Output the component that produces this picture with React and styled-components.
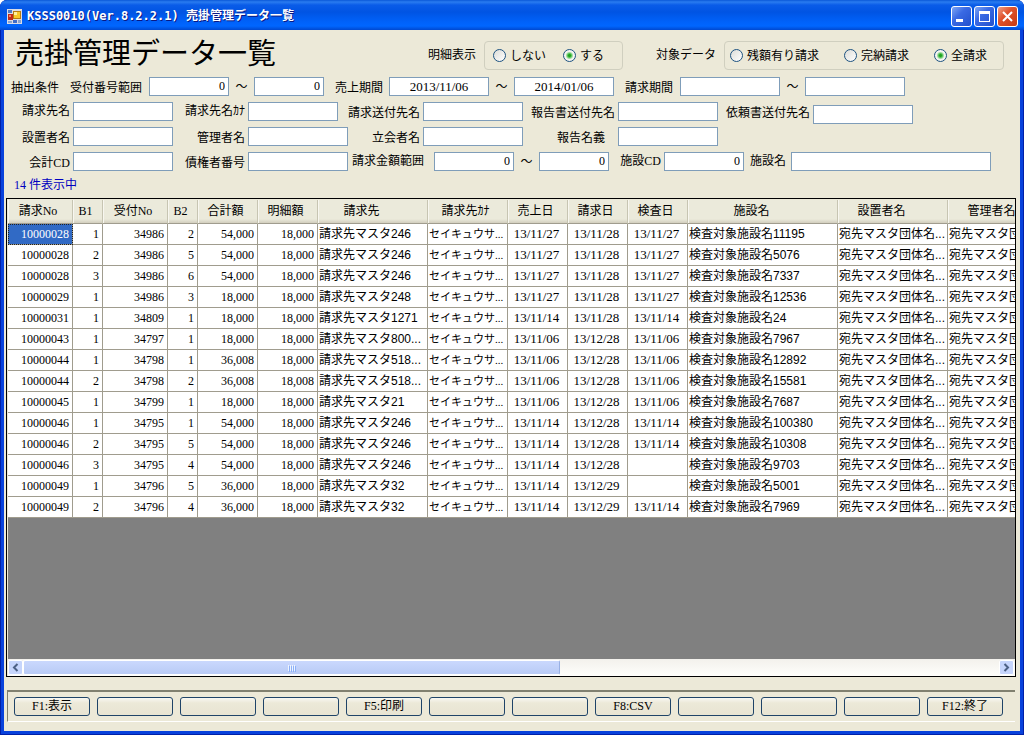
import React, { useState } from "react"
import styled, { createGlobalStyle, css } from "styled-components"

const GlobalStyle = createGlobalStyle`
  * {
    box-sizing: border-box;
  }
  body {
    margin: 0;
    background: #fff;
    color: #000;
    font-family: "Liberation Serif", "Noto Sans CJK JP", serif;
    font-size: 12px;
  }
  button, input {
    margin: 0;
    padding: 0;
    font: inherit;
    color: inherit;
  }
`

const Window = styled.div`
  display: flex;
  flex-direction: column;
  min-height: 100vh;
  overflow: hidden;
  border-radius: 7px 7px 0 0;
  background: #0842dc;
  box-shadow: inset 0 0 0 1px #0020a8;
`

const TitleBar = styled.header`
  display: flex;
  align-items: center;
  gap: 2px;
  height: 30px;
  padding: 2px 6px 0 7px;
  background: linear-gradient(
    #0a58d8 0,
    #2a7cf0 2px,
    #0a5ce8 5px,
    #0054e3 12px,
    #0062fa 22px,
    #0066ff 26px,
    #0048d0 30px
  );
`

const Caption = styled.div`
  flex: 1;
  padding-left: 3px;
  color: #fff;
  font-family: "DejaVu Sans Mono", "Noto Sans CJK JP", monospace;
  font-size: 12px;
  font-weight: 700;
  line-height: 20px;
  white-space: nowrap;
  text-shadow: 1px 1px 0 #0a1883;
`

const CaptionButton = styled.button`
  display: flex;
  align-items: center;
  justify-content: center;
  width: 21px;
  height: 21px;
  border: 1px solid #fff;
  border-radius: 3px;
  background: ${({ $close }) =>
    $close
      ? "linear-gradient(135deg, #f0a088, #e0532c 40%, #c63a12)"
      : "linear-gradient(135deg, #7ea6f4, #3a6ae4 40%, #2250cc)"};
`

const Client = styled.main`
  flex: 1;
  display: flex;
  flex-direction: column;
  margin: 0 4px 4px;
  background: #ece9d8;
`

const Heading = styled.div`
  display: flex;
  align-items: flex-start;
  height: 47px;
  padding: 11px 16px 0 11px;
`

const Title = styled.h1`
  flex: 1;
  margin: 0;
  font-size: 29px;
  font-weight: 400;
  line-height: 26px;
  white-space: nowrap;
`

const GroupLabel = styled.span`
  padding: 0 8px 0 33px;
  line-height: 28px;
`

const RadioGroup = styled.div`
  display: flex;
  align-items: center;
  height: 29px;
  padding-left: ${({ $pad }) => $pad}px;
  border: 1px solid #d0cfbf;
  border-radius: 4px;
`

const RadioLabel = styled.label`
  display: flex;
  align-items: center;
  gap: 4px;
  width: ${({ $w }) => $w}px;
  line-height: 20px;
  white-space: nowrap;
`

const Radio = styled.input`
  appearance: none;
  width: 13px;
  height: 13px;
  border: 1px solid #1d5281;
  border-radius: 50%;
  background: linear-gradient(135deg, #dcdcd7, #fff);
  &:checked {
    background: radial-gradient(circle, #21a121 0 1px, #55c455 2px, #f4f4f1 4px);
  }
`

const Filters = styled.form`
  display: flex;
  flex-direction: column;
  gap: 3px;
`

const FilterRow = styled.div`
  display: flex;
  height: 22px;
`

const Field = styled.div`
  display: flex;
  align-items: ${({ $low }) => ($low ? "flex-end" : "flex-start")};
`

const Label = styled.label`
  width: ${({ $w }) => $w}px;
  padding-right: ${({ $pad }) => $pad || 3}px;
  line-height: ${({ $high }) => ($high ? 19 : 22)}px;
  text-align: right;
  white-space: nowrap;
`

const Tilde = styled.span`
  width: 25px;
  line-height: 20px;
  text-align: center;
`

const TextBox = styled.input`
  width: ${({ $w }) => $w || 100}px;
  height: 19px;
  padding: 0 3px;
  border: 1px solid #7f9db9;
  background: #fff;
  text-align: ${({ $align }) => $align || "left"};
  font-size: ${({ $align }) => ($align === "center" ? 13 : 12)}px;
  line-height: 17px;
`

const Count = styled.p`
  margin: 0;
  padding-left: 10px;
  color: #0000c0;
  line-height: 22px;
  height: 24px;
`

const GridFrame = styled.section`
  flex: 1;
  display: flex;
  flex-direction: column;
  min-width: 0;
  margin: 0 4px 0 2px;
  padding: 1px 0 0 1px;
  border: 1px solid #000;
  background: #ece9d8;
`

const GridBody = styled.div`
  flex: 1;
  overflow: hidden;
  background: #808080;
`

const Table = styled.table`
  width: 1050px;
  table-layout: fixed;
  border-collapse: separate;
  border-spacing: 0;
`

const HeadCell = styled.th`
  height: 24px;
  padding: 0 ${({ $sortable }) => ($sortable ? 22 : 4)}px 2px 0;
  border-right: 1px solid #c7c5b2;
  border-bottom: 1px solid #a09c8e;
  background: linear-gradient(#ebeadb 19px, #d2cebe 23px);
  font-weight: 400;
  line-height: 20px;
  text-align: center;
  white-space: nowrap;
  box-shadow: inset 1px 0 0 #f8f7f0;
`

const Cell = styled.td`
  height: 21px;
  padding: 0 1px;
  border-right: 1px solid #a09c8e;
  border-bottom: 1px solid #a09c8e;
  background: #fff;
  line-height: 20px;
  text-align: left;
  white-space: nowrap;
  overflow: hidden;
  ${({ $kind }) =>
    $kind === "number" &&
    css`
      padding-right: 3px;
      text-align: right;
    `}
  ${({ $kind }) =>
    $kind === "date" &&
    css`
      padding: 0 2px 0 0;
      font-size: 13px;
      text-align: center;
    `}
  ${({ $kind }) =>
    $kind === "kana" &&
    css`
      font-size: 11px;
    `}
  ${({ $kind }) =>
    $kind === "text" &&
    css`
      font-family: "Liberation Sans", "Noto Sans CJK JP", sans-serif;
    `}
  ${({ $selected }) =>
    $selected &&
    css`
      background: #316ac5;
      color: #fff;
      outline: 1px dotted #222;
      outline-offset: -1px;
    `}
`

const ScrollBar = styled.div`
  display: flex;
  height: 17px;
  padding: 1px 1px 1px 0;
  background: linear-gradient(#f3f1ec, #fefefb);
`

const ScrollButton = styled.button`
  display: flex;
  align-items: center;
  justify-content: center;
  width: 15px;
  height: 15px;
  border: 1px solid #fff;
  border-radius: 2px;
  background: #c6d5fc;
`

const Track = styled.div`
  flex: 1;
  display: flex;
`

const Thumb = styled.div`
  display: flex;
  align-items: center;
  justify-content: center;
  gap: 1px;
  width: 55%;
  border: 1px solid #fff;
  border-right-color: #98b0e4;
  border-radius: 2px;
  background: linear-gradient(#cad8fd, #b9cbf6);
`

const Grip = styled.span`
  width: 1px;
  height: 6px;
  background: #eef4fe;
  box-shadow: 1px 1px 0 #8cb0f8;
`

const FunctionBar = styled.footer`
  display: grid;
  grid-template-columns: repeat(12, 1fr);
  gap: 7px;
  margin: 13px 5px 9px 3px;
  padding: 5px 12px 5px 6px;
  border: solid;
  border-width: 2px 0 1px 1px;
  border-color: #808070 #fff #fff #808070;
`

const FunctionButton = styled.button`
  height: 19px;
  border: 1px solid #1f4468;
  border-radius: 3px;
  background: linear-gradient(#f8f7f2, #ece9d8 5px, #e8e4d2);
  line-height: 17px;
  white-space: nowrap;
`

const columns = [
  { label: "請求No", width: 65, kind: "number" },
  { label: "B1", width: 30, kind: "number" },
  { label: "受付No", width: 65, kind: "number" },
  { label: "B2", width: 30, kind: "number" },
  { label: "合計額", width: 60, kind: "number" },
  { label: "明細額", width: 60, kind: "number" },
  { label: "請求先", width: 110, kind: "text", sortable: true },
  { label: "請求先ｶﾅ", width: 80, kind: "kana" },
  { label: "売上日", width: 60, kind: "date" },
  { label: "請求日", width: 60, kind: "date" },
  { label: "検査日", width: 60, kind: "date" },
  { label: "施設名", width: 150, kind: "text", sortable: true },
  { label: "設置者名", width: 110, kind: "text", sortable: true },
  { label: "管理者名", width: 110, kind: "text", sortable: true },
]

const KANA = "セイキュウサ..."
const OWNER = "宛先マスタ団体名..."

const rows = [
  ["10000028", "1", "34986", "2", "54,000", "18,000", "246", "13/11/27", "13/11/28", "13/11/27", "11195"],
  ["10000028", "2", "34986", "5", "54,000", "18,000", "246", "13/11/27", "13/11/28", "13/11/27", "5076"],
  ["10000028", "3", "34986", "6", "54,000", "18,000", "246", "13/11/27", "13/11/28", "13/11/27", "7337"],
  ["10000029", "1", "34986", "3", "18,000", "18,000", "248", "13/11/27", "13/11/28", "13/11/27", "12536"],
  ["10000031", "1", "34809", "1", "18,000", "18,000", "1271", "13/11/14", "13/11/28", "13/11/14", "24"],
  ["10000043", "1", "34797", "1", "18,000", "18,000", "800...", "13/11/06", "13/12/28", "13/11/06", "7967"],
  ["10000044", "1", "34798", "1", "36,008", "18,000", "518...", "13/11/06", "13/12/28", "13/11/06", "12892"],
  ["10000044", "2", "34798", "2", "36,008", "18,008", "518...", "13/11/06", "13/12/28", "13/11/06", "15581"],
  ["10000045", "1", "34799", "1", "18,000", "18,000", "21", "13/11/06", "13/12/28", "13/11/06", "7687"],
  ["10000046", "1", "34795", "1", "54,000", "18,000", "246", "13/11/14", "13/12/28", "13/11/14", "100380"],
  ["10000046", "2", "34795", "5", "54,000", "18,000", "246", "13/11/14", "13/12/28", "13/11/14", "10308"],
  ["10000046", "3", "34795", "4", "54,000", "18,000", "246", "13/11/14", "13/12/28", "", "9703"],
  ["10000049", "1", "34796", "5", "36,000", "18,000", "32", "13/11/14", "13/12/29", "", "5001"],
  ["10000049", "2", "34796", "4", "36,000", "18,000", "32", "13/11/14", "13/12/29", "13/11/14", "7969"],
].map(r => [
  ...r.slice(0, 6),
  `請求先マスタ${r[6]}`,
  KANA,
  ...r.slice(7, 10),
  `検査対象施設名${r[10]}`,
  OWNER,
  OWNER,
])

const functionKeys = ["F1:表示", "", "", "", "F5:印刷", "", "", "F8:CSV", "", "", "", "F12:終了"]

const AppIcon = () => (
  <svg width="15" height="15" viewBox="0 0 15 15" aria-hidden="true">
    <path d="M0 0h15v15H0z" fill="#dcdce4" />
    <path d="M1 1h4v3H1z" fill="#4f7cc8" />
    <path d="M1 5h5v6H1z" fill="#c02a18" />
    <path d="M2 6h2v2H2z" fill="#f08068" />
    <path d="M6 2h8v8H6z" fill="#b87c10" />
    <path d="M7 3h6v6H7z" fill="#f8c828" />
    <path d="M7 3h3v3H7z" fill="#fff0a0" />
    <path d="M1 12h4v2H1zM11 11h3v3h-3z" fill="#8aa4d0" />
    <path d="M6 11h4v3H6z" fill="#3f6cc8" />
  </svg>
)

const Chevron = ({ right }) => (
  <svg width="7" height="9" viewBox="0 0 7 9" aria-hidden="true">
    <path d={right ? "M1.5 1 5 4.5 1.5 8" : "M5.5 1 2 4.5 5.5 8"} fill="none" stroke="#4d6185" strokeWidth="2" />
  </svg>
)

const LabeledBox = ({ id, label, w, pad, high, low, box, align, value = "" }) => (
  <Field $low={low}>
    <Label htmlFor={id} $w={w} $pad={pad} $high={high}>{label}</Label>
    <TextBox id={id} $w={box} $align={align} defaultValue={value} />
  </Field>
)

const Options = ({ name, label, pad, options, initial }) => {
  const [value, setValue] = useState(initial)
  return (
    <>
      <GroupLabel id={`${name}-label`}>{label}</GroupLabel>
      <RadioGroup role="radiogroup" aria-labelledby={`${name}-label`} $pad={pad}>
        {options.map(([text, width]) => (
          <RadioLabel key={text} $w={width}>
            <Radio type="radio" name={name} checked={value === text} onChange={() => setValue(text)} />
            {text}
          </RadioLabel>
        ))}
      </RadioGroup>
    </>
  )
}

const App = () => {
  return (
    <Window>
      <GlobalStyle />
      <TitleBar>
        <AppIcon />
        <Caption>KSSS0010(Ver.8.2.2.1) 売掛管理データ一覧</Caption>
        <CaptionButton type="button" aria-label="最小化">
          <svg width="13" height="13" viewBox="0 0 13 13"><path d="M1 9h7v3H1z" fill="#fff" /></svg>
        </CaptionButton>
        <CaptionButton type="button" aria-label="最大化">
          <svg width="13" height="13" viewBox="0 0 13 13">
            <path d="M1 1h11v11H1zM2 4v7h9V4z" fill="#fff" fillRule="evenodd" />
          </svg>
        </CaptionButton>
        <CaptionButton type="button" aria-label="閉じる" $close>
          <svg width="13" height="13" viewBox="0 0 13 13">
            <path d="M2 2l9 9M11 2l-9 9" stroke="#fff" strokeWidth="2" />
          </svg>
        </CaptionButton>
      </TitleBar>

      <Client>
        <Heading>
          <Title>売掛管理データ一覧</Title>
          <Options name="detail" label="明細表示" pad={8} initial="する" options={[["しない", 70], ["する", 59]]} />
          <Options
            name="target"
            label="対象データ"
            pad={5}
            initial="全請求"
            options={[["残額有り請求", 114], ["完納請求", 90], ["全請求", 69]]}
          />
        </Heading>

        <Filters>
          <FilterRow>
            <Label as="span" $w={58}>抽出条件</Label>
            <LabeledBox id="receiptFrom" label="受付番号範囲" w={87} pad={7} box={80} align="right" value="0" />
            <Tilde>～</Tilde>
            <TextBox aria-label="受付番号範囲 終了" $w={70} $align="right" defaultValue="0" />
            <LabeledBox id="salesFrom" label="売上期間" w={65} pad={6} align="center" value="2013/11/06" />
            <Tilde>～</Tilde>
            <TextBox aria-label="売上期間 終了" $align="center" defaultValue="2014/01/06" />
            <LabeledBox id="billFrom" label="請求期間" w={66} pad={7} />
            <Tilde>～</Tilde>
            <TextBox aria-label="請求期間 終了" />
          </FilterRow>
          <FilterRow>
            <LabeledBox id="billTo" label="請求先名" w={69} high />
            <LabeledBox id="billToKana" label="請求先名ｶﾅ" w={75} box={90} high />
            <LabeledBox id="billSendTo" label="請求送付先名" w={85} />
            <LabeledBox id="reportSendTo" label="報告書送付先名" w={95} />
            <LabeledBox id="requestSendTo" label="依頼書送付先名" w={95} low />
          </FilterRow>
          <FilterRow>
            <LabeledBox id="installer" label="設置者名" w={69} />
            <LabeledBox id="manager" label="管理者名" w={75} />
            <LabeledBox id="witness" label="立会者名" w={75} />
            <LabeledBox id="reportName" label="報告名義" w={95} pad={13} />
          </FilterRow>
          <FilterRow>
            <LabeledBox id="accountCd" label="会計CD" w={69} />
            <LabeledBox id="creditorNo" label="債権者番号" w={75} />
            <LabeledBox id="amountFrom" label="請求金額範囲" w={86} pad={10} box={80} align="right" value="0" high />
            <Tilde>～</Tilde>
            <TextBox aria-label="請求金額範囲 終了" $w={70} $align="right" defaultValue="0" />
            <LabeledBox id="facilityCd" label="施設CD" w={55} box={80} align="right" value="0" high />
            <LabeledBox id="facilityName" label="施設名" w={47} pad={5} box={200} high />
          </FilterRow>
        </Filters>
        <Count>14 件表示中</Count>

        <GridFrame>
          <GridBody>
            <Table>
              <colgroup>
                {columns.map(c => (
                  <col key={c.label} width={c.width} />
                ))}
              </colgroup>
              <thead>
                <tr>
                  {columns.map(c => (
                    <HeadCell key={c.label} scope="col" $sortable={c.sortable}>{c.label}</HeadCell>
                  ))}
                </tr>
              </thead>
              <tbody>
                {rows.map((row, y) => (
                  <tr key={y}>
                    {row.map((text, x) => (
                      <Cell key={x} $kind={columns[x].kind} $selected={x === 0 && y === 0}>{text}</Cell>
                    ))}
                  </tr>
                ))}
              </tbody>
            </Table>
          </GridBody>
          <ScrollBar>
            <ScrollButton type="button" aria-label="左へスクロール"><Chevron /></ScrollButton>
            <Track>
              <Thumb>
                <Grip /><Grip /><Grip /><Grip />
              </Thumb>
            </Track>
            <ScrollButton type="button" aria-label="右へスクロール"><Chevron right /></ScrollButton>
          </ScrollBar>
        </GridFrame>

        <FunctionBar>
          {functionKeys.map((key, i) => (
            <FunctionButton key={i} type="button" aria-label={key || `F${i + 1}`}>{key}</FunctionButton>
          ))}
        </FunctionBar>
      </Client>
    </Window>
  )
}

export default App
